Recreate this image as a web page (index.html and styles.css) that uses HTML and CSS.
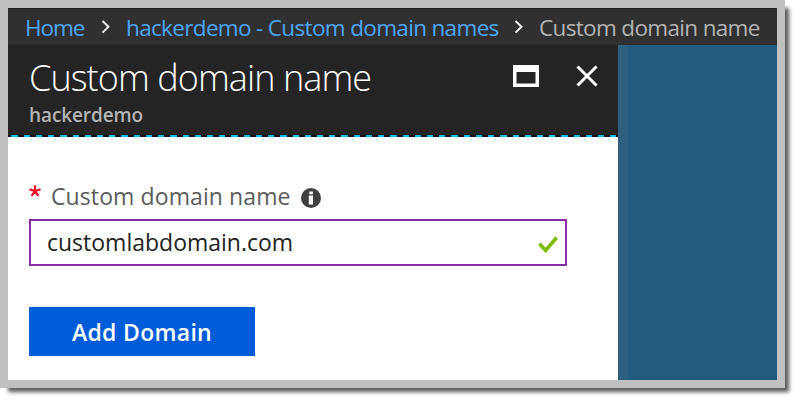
FILE: index.html
```
<!DOCTYPE html>
<html lang="en">
<head>
<meta charset="utf-8">
<title>Custom domain name</title>
<link rel="stylesheet" href="styles.css">
</head>
<body>
<div class="window">
  <nav class="crumbs">
    <a class="home">Home</a>
    <svg class="chev" viewBox="0 0 10 16"><path d="M1.5 2 7.5 7.8 1.5 13.6"/></svg>
    <a class="parent">hackerdemo - Custom domain names</a>
    <svg class="chev" viewBox="0 0 10 16"><path d="M1.5 2 7.5 7.8 1.5 13.6"/></svg>
    <span class="current">Custom domain name</span>
  </nav>
  <div class="workspace">
    <section class="blade">
      <header class="head">
        <div class="titles">
          <h1>Custom domain name</h1>
          <p class="sub">hackerdemo</p>
        </div>
        <svg class="max" viewBox="0 0 26 22"><path fill-rule="evenodd" d="M0 0H26V22H0ZM3.5 7V18.5H22.500V7Z"/></svg>
        <svg class="close" viewBox="0 0 22 22"><path d="M1.500 1.500 20.500 20.500M20.500 1.500 1.500 20.500"/></svg>
      </header>
      <form class="form">
        <div class="label">
          <svg class="star" viewBox="0 0 12 12"><path d="M6 6V.3M6 6 .5 4.400M6 6 11.500 4.400M6 6 2.600 10.800M6 6 9.400 10.800"/></svg>
          <span class="label-text">Custom domain name</span>
          <svg class="info" viewBox="0 0 20 20"><circle cx="10" cy="10" r="10"/><path d="M8.300 3.400H11.900V6.300H8.300ZM7.800 7.600H12V16.600H7.800Z"/></svg>
        </div>
        <div class="field">
          <span class="value">customlabdomain.com</span>
          <svg class="check" viewBox="0 0 20 17"><path d="M1.300 7.800 7.700 14.300 18.600 1.500"/></svg>
        </div>
        <button type="button" class="btn"><span>Add Domain</span></button>
      </form>
    </section>
  </div>
</div>
</body>
</html>
```
FILE: styles.css
```
* { box-sizing: border-box; }
html { height: 403px; }
body {
  margin: 0;
  height: 403px;
  background: #fff;
  overflow: hidden;
  font-family: "Open Sans", "Noto Sans", sans-serif;
}
svg { display: block; flex: none; }
.window {
  width: 785px;
  height: 388px;
  border: 8px solid #c0c0c0;
  background: #fff;
  box-shadow: 6px 6px 4px -2px rgba(0, 0, 0, .65);
}
.crumbs {
  height: 37px;
  display: flex;
  align-items: center;
  padding-left: 17px;
  background: #303030;
  border-top: 1px solid #222;
  font-size: 22.5px;
  line-height: 36px;
  letter-spacing: -.66px;
  white-space: nowrap;
  color: #4ea6f8;
}
.crumbs a, .current { padding-top: 1px; flex: none; }
.home { width: 76px; letter-spacing: -1.1px; }
.parent { width: 388px; margin-left: 15px; }
.chev { width: 10px; height: 16px; fill: none; stroke: #eee; stroke-width: 2; }
.current { color: #b3b3b3; margin-left: 15px; }
.workspace {
  height: 335px;
  background: linear-gradient(90deg, #2d607f 620px, #235b7e 620px);
}
.blade { width: 610px; height: 335px; background: #fff; }
.head {
  height: 92px;
  display: flex;
  padding-left: 21px;
  background:
    repeating-linear-gradient(90deg, #111 0 3.500px, #00bdf2 3.500px 9.700px, #111 9.700px 12.220px) 0 100% / 100% 2px no-repeat,
    #242424;
}
.titles { width: 484px; white-space: nowrap; }
h1 {
  margin: 8px 0 0;
  font-size: 36px;
  font-weight: 300;
  line-height: 50px;
  letter-spacing: -.92px;
  color: #fff;
}
.sub {
  margin: 0;
  font-size: 19px;
  font-weight: 600;
  line-height: 24px;
  letter-spacing: -.1px;
  color: #b4b4b4;
}
.max { width: 26px; height: 22px; margin-top: 20px; fill: #fff; }
.close { width: 22px; height: 22px; margin: 20px 0 0 37px; fill: none; stroke: #fff; stroke-width: 3; }
.form { padding: 44px 0 0 21px; }
.label { display: flex; height: 32px; color: #5c5c5c; font-size: 23px; line-height: 30px; white-space: nowrap; }
.star { width: 12px; height: 12px; margin-top: 4px; fill: none; stroke: #e81123; stroke-width: 2.200; }
.label-text { width: 250px; margin-left: 10px; letter-spacing: .1px; }
.info { width: 20px; height: 20px; margin-top: 7px; fill: #404040; }
.info path { fill: #fff; }
.field {
  display: flex;
  align-items: center;
  width: 538px;
  height: 47px;
  margin-top: 6px;
  padding-left: 16px;
  border: 2px solid #8a2da5;
  color: #222;
  font-size: 23px;
  line-height: 43px;
}
.value { width: 491px; }
.check { width: 20px; height: 17px; margin-top: 3px; fill: none; stroke: #7fba00; stroke-width: 3.600; }
.btn {
  display: block;
  width: 226px;
  height: 49px;
  margin-top: 41px;
  padding: 2px 0 0;
  border: 0;
  background: #015cda;
  color: #fff;
  font: 600 23px/47px "Open Sans", "Noto Sans", sans-serif;
  letter-spacing: .3px;
  white-space: nowrap;
}
```
